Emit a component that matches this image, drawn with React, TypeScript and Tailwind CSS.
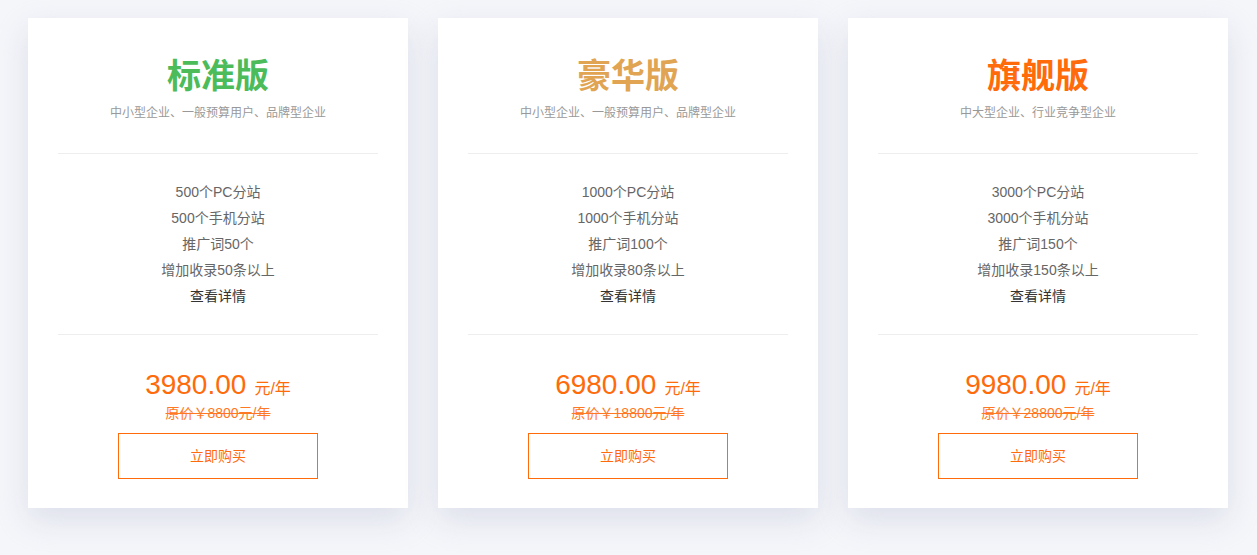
import React from "react";

const plans = [
  {
    name: "标准版",
    color: "text-[#4cbb5a]",
    desc: "中小型企业、一般预算用户、品牌型企业",
    features: ["500个PC分站", "500个手机分站", "推广词50个", "增加收录50条以上"],
    price: "3980.00",
    orig: "原价￥8800元/年",
  },
  {
    name: "豪华版",
    color: "text-[#e0a452]",
    desc: "中小型企业、一般预算用户、品牌型企业",
    features: ["1000个PC分站", "1000个手机分站", "推广词100个", "增加收录80条以上"],
    price: "6980.00",
    orig: "原价￥18800元/年",
  },
  {
    name: "旗舰版",
    color: "text-[#ff6a0b]",
    desc: "中大型企业、行业竞争型企业",
    features: ["3000个PC分站", "3000个手机分站", "推广词150个", "增加收录150条以上"],
    price: "9980.00",
    orig: "原价￥28800元/年",
  },
];

export default function App() {
  return (
    <div
      className="w-full min-h-[555px] bg-[#f5f6fa] pt-[18px] pl-[28px] flex gap-[30px]"
      style={{ fontFamily: '"Liberation Sans", "Noto Sans CJK SC", sans-serif' }}
    >
      {plans.map((p) => (
        <div
          key={p.name}
          className="w-[380px] h-[490px] shrink-0 bg-white px-[30px] shadow-[0_12px_30px_rgba(190,196,215,0.45)] text-center"
        >
          <div className="h-[136px] pt-[38px] border-b border-[#eeeeee]">
            <div className={`h-[40px] leading-[40px] text-[34px] font-bold ${p.color}`}>{p.name}</div>
            <div className="mt-[7px] leading-[20px] text-[12px] text-[#999999]">{p.desc}</div>
          </div>
          <div className="pt-[25px] pb-[25px] border-b border-[#eeeeee] text-[14px] leading-[26px] text-[#666666]">
            {p.features.map((f) => (
              <div key={f}>{f}</div>
            ))}
            <div className="text-[#333333]">查看详情</div>
          </div>
          <div className="pt-[32px] flex flex-col items-center">
            <div className="h-[36px] leading-[36px] text-[#ff6a0b]">
              <span className="text-[28px]">{p.price}</span>
              <span className="text-[16px] ml-[8px]">元/年</span>
            </div>
            <div className="h-[20px] leading-[20px] text-[14px] text-[#ff6a0b] line-through opacity-90">{p.orig}</div>
            <button className="mt-[10px] w-[200px] h-[46px] border border-[#ff6a0b] text-[#ff6a0b] text-[14px] bg-white">
              立即购买
            </button>
          </div>
        </div>
      ))}
    </div>
  );
}
